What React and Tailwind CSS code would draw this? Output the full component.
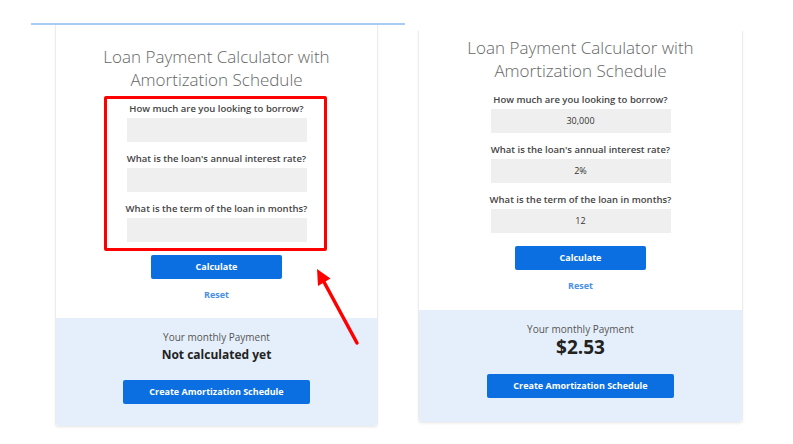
import React from 'react';

const font = { fontFamily: '"Open Sans", "Liberation Sans", sans-serif' };

function Field({ label, value, first }) {
  return (
    <div className={`flex flex-col items-center ${first ? '' : 'mt-[10px]'}`}>
      <p className="text-[9.5px] leading-[14px] font-semibold text-[#444] mb-[2px]">{label}</p>
      <div className="w-[180px] h-6 bg-[#efefef] flex items-center justify-center text-[9px] text-[#333]">
        {value}
      </div>
    </div>
  );
}

function Card({ values, payment, annotate, className }) {
  const bigValue = payment !== null;
  return (
    <div className={`flex flex-col border-x border-b border-[#ececec] rounded-b-[4px] shadow-[0_1px_3px_rgba(0,0,0,0.05)] bg-white ${className}`}>
      <div className={`flex flex-col items-center ${annotate ? 'pt-5 pb-4' : 'pt-[5px] pb-[17px]'}`}>
        <h1 className="text-[17px] leading-[23px] font-light text-[#666] text-center">
          Loan Payment Calculator with
          <br />
          Amortization Schedule
        </h1>

        <div className="relative w-full mt-[11px]">
          <Field first label="How much are you looking to borrow?" value={values[0]} />
          <Field label="What is the loan's annual interest rate?" value={values[1]} />
          <Field label="What is the term of the loan in months?" value={values[2]} />
          {annotate && (
            <div className="absolute left-[48px] right-[50px] top-[-6px] bottom-[-9px] border-[3px] border-[#ff0000] rounded-[2px]" />
          )}
        </div>

        <button className="mt-[13px] w-[131px] h-6 rounded-[2px] bg-[#0b6fe2] text-white text-[9px] font-bold">
          Calculate
        </button>
        <p className="mt-[9px] text-[9px] leading-[14px] font-bold text-[#4a8fe6]">Reset</p>
      </div>

      <div className={`flex flex-col items-center bg-[#e5effb] pt-3 rounded-b-[4px] ${bigValue ? 'pb-6' : 'pb-[22px]'}`}>
        <p className="text-[10px] leading-[14px] text-[#555]">Your monthly Payment</p>
        {bigValue ? (
          <p className="text-[19px] leading-[22px] font-bold text-[#222]">{payment}</p>
        ) : (
          <p className="mt-[2px] text-[12px] leading-[17px] font-bold text-[#222]">Not calculated yet</p>
        )}
        <button className={`${bigValue ? 'mt-4' : 'mt-[17px]'} w-[187px] h-6 rounded-[2px] bg-[#0b6fe2] text-white text-[9px] font-bold`}>
          Create Amortization Schedule
        </button>
      </div>
    </div>
  );
}

export default function App() {
  return (
    <div className="relative w-[793px] h-[444px] bg-white flex items-start overflow-hidden" style={font}>
      <div className="ml-[31px] w-[374px] pt-[23px] flex flex-col">
        <div className="h-[2px] bg-[#a8cdf5]" />
        <Card annotate values={['', '', '']} payment={null} className="ml-[24px] w-[323px]" />
      </div>

      <Card values={['30,000', '2%', '12']} payment="$2.53" className="ml-[13px] mt-[31px] w-[325px]" />

      {/* red pointer arrow */}
      <svg className="absolute left-0 top-0 pointer-events-none" width="793" height="444">
        <line x1="357" y1="343" x2="324" y2="282" stroke="#ff0000" strokeWidth="3.5" strokeLinecap="round" />
        <polygon points="317,269 330.5,278.5 318,286" fill="#ff0000" />
      </svg>
    </div>
  );
}
